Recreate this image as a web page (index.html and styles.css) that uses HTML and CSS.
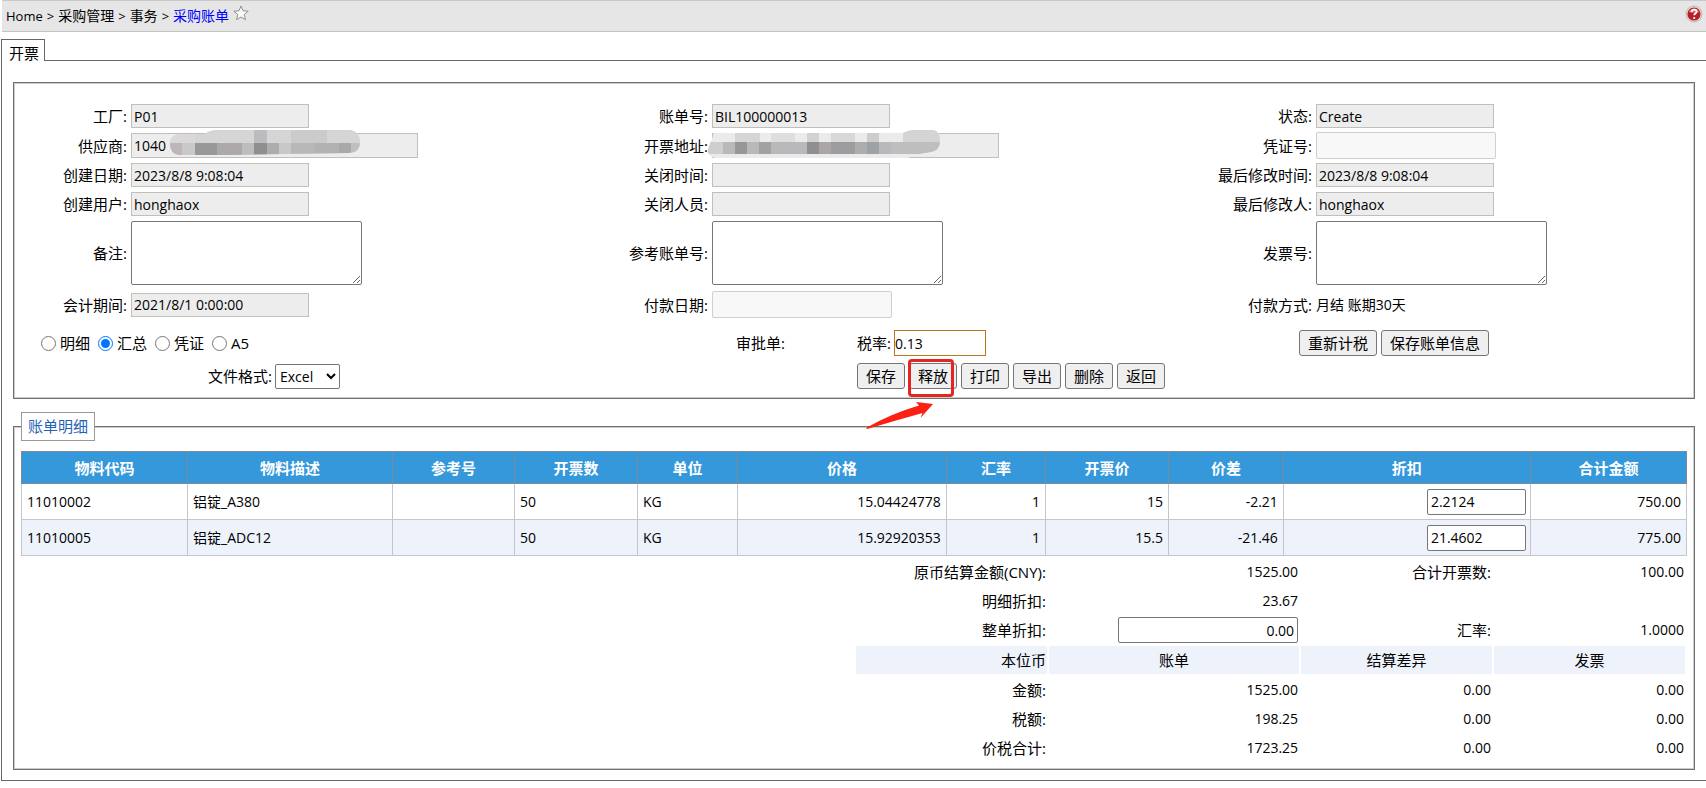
FILE: index.html
```html
<!DOCTYPE html>
<html lang="zh-CN">
<head>
<meta charset="utf-8">
<title>采购账单</title>
<link rel="stylesheet" href="styles.css">
</head>
<body>
<header class="topbar">
  <nav class="crumbs">
    <span class="latin">Home</span><span class="latin">&gt;</span><span>采购管理</span><span class="latin">&gt;</span><span>事务</span><span class="latin">&gt;</span><a href="#">采购账单</a>
    <svg class="star" viewBox="0 0 16 16"><path d="M8 1l2 4.8 5.2.4-4 3.4 1.3 5.1L8 12l-4.500 2.700 1.300-5.100-4-3.400 5.200-.4z" fill="#fbfbfb" stroke="#8f8f8f" stroke-linejoin="round"/></svg>
  </nav>
  <svg class="help" viewBox="0 0 18 18"><circle cx="9" cy="9" r="8" fill="#e9dede" stroke="#c9b4b4"/><circle cx="9" cy="9" r="6.600" fill="#b3202a"/><path d="M3.500 7a6 6 0 0 1 11 0q-5.500 2-11 0z" fill="#cf6a70"/><path d="M6.600 7c0-3.200 5-3.200 5-.3 0 1.800-2.400 1.700-2.400 3.600" fill="none" stroke="#fff" stroke-width="1.800"/><circle cx="9.200" cy="13" r="1.100" fill="#fff"/></svg>
</header>

<div class="tabs"><a class="tab" href="#">开票</a></div>

<main class="page">
  <fieldset class="panel bill">
    <div class="form">
      <label for="plant">工厂:</label><div><input class="ro" id="plant" value="P01" readonly></div>
      <label for="billno">账单号:</label><div><input class="ro" id="billno" value="BIL100000013" readonly></div>
      <label for="status">状态:</label><div><input class="ro" id="status" value="Create" readonly></div>

      <label for="vendor">供应商:</label>
      <div class="masked"><input class="ro wide" id="vendor" value="1040" readonly>
        <svg class="mask mask-vendor" viewBox="0 0 190 26"><defs><clipPath id="m1"><path d="M10 4H34Q40 0 46 0H181Q190 2 190 12Q190 23 178 23L60 25H9Q0 24 0 14Q0 5 10 4Z"/></clipPath></defs><g clip-path="url(#m1)"><rect width="190" height="26" fill="#d5d5d5"/><rect y="0" width="25" height="13" fill="#dad8d8"/><rect y="13" width="12" height="13" fill="#bdb6b8"/><rect x="12" y="13" width="13" height="13" fill="#c9c9c9"/><rect x="25" y="13" width="22" height="13" fill="#98989a"/><rect x="47" y="13" width="25" height="13" fill="#aca8ab"/><rect x="72" y="13" width="12" height="13" fill="#bdbdbf"/><rect x="84" y="0" width="13" height="13" fill="#bcbcbe"/><rect x="84" y="13" width="13" height="13" fill="#8f8f91"/><rect x="97" y="13" width="12" height="13" fill="#adadaf"/><rect x="109" y="13" width="12" height="13" fill="#c8c8c8"/><rect x="121" y="13" width="24" height="13" fill="#b7b8ba"/><rect x="121" y="0" width="36" height="13" fill="#cbcbcc"/><rect x="145" y="13" width="24" height="13" fill="#b4b1b3"/><rect x="169" y="13" width="12" height="13" fill="#a9a9aa"/><rect x="181" y="13" width="12" height="13" fill="#bfbfbf"/></g></svg>
      </div>
      <label for="addr">开票地址:</label>
      <div class="masked"><input class="ro wide" id="addr" readonly>
        <svg class="mask mask-addr" viewBox="0 0 232 28"><defs><clipPath id="m2"><path d="M6 3H195Q200 0 206 0H225Q232 1 232 10Q232 21 222 22L210 24L200 28H8Q0 27 0 20Z"/></clipPath></defs><g clip-path="url(#m2)"><rect width="232" height="28" fill="#ebebeb"/><rect y="12" width="232" height="12" fill="#b9b9bb"/><rect width="15" y="12" height="12" fill="#cfcdce"/><rect x="27" width="25" height="12" fill="#d6d6d6"/><rect x="27" y="12" width="12" height="12" fill="#979798"/><rect x="51" y="12" width="12" height="12" fill="#a3a0a2"/><rect x="63" width="24" height="12" fill="#dedede"/><rect x="99" width="12" height="12" fill="#d2d2d2"/><rect x="99" y="12" width="12" height="12" fill="#8f8f91"/><rect x="111" y="12" width="12" height="12" fill="#aaa5a6"/><rect x="123" width="24" height="12" fill="#d8d8d8"/><rect x="123" y="12" width="24" height="12" fill="#9d9d9f"/><rect x="147" y="12" width="12" height="12" fill="#adadae"/><rect x="159" width="12" height="12" fill="#cdcdcd"/><rect x="159" y="12" width="12" height="12" fill="#9ca2a5"/><rect x="195" width="37" height="12" fill="#d4d4d4"/><rect x="183" y="12" width="49" height="12" fill="#bebec0"/></g></svg>
      </div>
      <label for="voucher">凭证号:</label><div><input class="off" id="voucher" disabled></div>

      <label for="cdate">创建日期:</label><div><input class="ro" id="cdate" value="2023/8/8 9:08:04" readonly></div>
      <label for="xdate">关闭时间:</label><div><input class="ro" id="xdate" readonly></div>
      <label for="mdate">最后修改时间:</label><div><input class="ro" id="mdate" value="2023/8/8 9:08:04" readonly></div>

      <label for="cuser">创建用户:</label><div><input class="ro" id="cuser" value="honghaox" readonly></div>
      <label for="xuser">关闭人员:</label><div><input class="ro" id="xuser" readonly></div>
      <label for="muser">最后修改人:</label><div><input class="ro" id="muser" value="honghaox" readonly></div>

      <label for="remark">备注:</label><div><textarea id="remark"></textarea></div>
      <label for="refno">参考账单号:</label><div><textarea id="refno"></textarea></div>
      <label for="invno">发票号:</label><div><textarea id="invno"></textarea></div>

      <label for="period">会计期间:</label><div><input class="ro" id="period" value="2021/8/1 0:00:00" readonly></div>
      <label for="paydate">付款日期:</label><div><input class="off" id="paydate" disabled></div>
      <span class="lbl">付款方式:</span><div>月结 账期30天</div>
    </div>

    <div class="actions">
      <div class="radios">
        <label><input type="radio" name="kind">明细</label>
        <label><input type="radio" name="kind" checked>汇总</label>
        <label><input type="radio" name="kind">凭证</label>
        <label><input type="radio" name="kind">A5</label>
      </div>
      <span class="lbl">审批单:</span>
      <div class="rate"><label for="rate">税率:</label><input id="rate" value="0.13"></div>
      <div class="buttons"><button>重新计税</button><button>保存账单信息</button></div>
      <div class="format"><label for="fmt">文件格式:</label><select id="fmt"><option>Excel</option></select></div>
      <div class="buttons main-buttons">
        <button>保存</button>
        <span class="marked"><button>释放</button><span class="redbox"></span>
          <svg class="arrow" viewBox="0 0 68 28"><path d="M0 27Q24 13 53 4.500L50 1 67 3 54.500 17 56.500 12Q28 20 1 28Z" fill="#fb1f14"/></svg></span>
        <button>打印</button><button>导出</button><button>删除</button><button>返回</button>
      </div>
    </div>
  </fieldset>

  <fieldset class="panel detail">
    <legend>账单明细</legend>
    <table class="items">
      <colgroup><col style="width:9.97%"><col style="width:12.31%"><col style="width:7.33%"><col style="width:7.39%"><col style="width:6%"><col style="width:12.55%"><col style="width:5.95%"><col style="width:7.39%"><col style="width:6.9%"><col style="width:14.84%"><col style="width:9.37%"></colgroup>
      <thead><tr><th>物料代码</th><th>物料描述</th><th>参考号</th><th>开票数</th><th>单位</th><th>价格</th><th>汇率</th><th>开票价</th><th>价差</th><th>折扣</th><th>合计金额</th></tr></thead>
      <tbody>
        <tr><td>11010002</td><td>铝锭_A380</td><td></td><td>50</td><td>KG</td><td class="num">15.04424778</td><td class="num">1</td><td class="num">15</td><td class="num">-2.21</td><td class="num"><input aria-label="折扣" value="2.2124"></td><td class="num">750.00</td></tr>
        <tr><td>11010005</td><td>铝锭_ADC12</td><td></td><td>50</td><td>KG</td><td class="num">15.92920353</td><td class="num">1</td><td class="num">15.5</td><td class="num">-21.46</td><td class="num"><input aria-label="折扣" value="21.4602"></td><td class="num">775.00</td></tr>
      </tbody>
    </table>
    <table class="totals">
      <colgroup><col class="c-side"><col class="c-mid"><col class="c-side"><col class="c-side"></colgroup>
      <tr><th>原币结算金额(CNY):</th><td>1525.00</td><th>合计开票数:</th><td>100.00</td></tr>
      <tr><th>明细折扣:</th><td>23.67</td><th></th><td></td></tr>
      <tr class="tall"><th><label for="disc">整单折扣:</label></th><td><input id="disc" value="0.00"></td><th>汇率:</th><td>1.0000</td></tr>
      <tr class="head tall"><th class="first">本位币</th><th>账单</th><th>结算差异</th><th>发票</th></tr>
      <tr><th>金额:</th><td>1525.00</td><td>0.00</td><td>0.00</td></tr>
      <tr><th>税额:</th><td>198.25</td><td>0.00</td><td>0.00</td></tr>
      <tr><th>价税合计:</th><td>1723.25</td><td>0.00</td><td>0.00</td></tr>
    </table>
  </fieldset>
</main>
</body>
</html>
```
FILE: styles.css
```css
* { box-sizing: border-box; }
body {
  margin: 0;
  background: #fff;
  color: #000;
  font: 14px/20px "Open Sans", "Noto Sans CJK SC", sans-serif;
}
input, textarea, select, button { font: inherit; color: inherit; margin: 0; }
a { text-decoration: none; color: inherit; }

.topbar {
  display: flex;
  justify-content: space-between;
  align-items: flex-start;
  height: 32px;
  margin-left: 2px;
  padding: 4px 3px 0 4px;
  background: #e6e6e6;
  border-top: 1px solid #c8c8c8;
  border-bottom: 1px solid #c4c4c4;
}
.crumbs { display: flex; gap: 4px; line-height: 22px; }
.crumbs .latin { font-size: 13px; }
.crumbs a { color: #00f; }
.star { width: 16px; height: 16px; }
.help { width: 18px; height: 18px; }

.tabs {
  display: flex;
  margin: 7px 0 0 1px;
  border-bottom: 1px solid #666;
}
.tab {
  height: 22px;
  margin-bottom: -1px;
  padding: 2px 5px 0 7px;
  font-size: 15px;
  line-height: 22px;
  background: #fff;
  border: 1px solid #666;
  border-bottom: 0;
}
.page {
  margin-left: 1px;
  padding: 21px 11px 10px;
  border-left: 1px solid #666;
  border-bottom: 1px solid #666;
}
.panel {
  margin: 0;
  min-width: 0;
  border: 1px solid #707070;
  box-shadow: inset 0 0 0 1px #ccc;
}
.bill { padding: 20px 1px 9px; }

.form {
  display: grid;
  grid-template-columns: 112fr 461fr 112fr 484fr 112fr 377fr;
  grid-auto-rows: minmax(26px, auto);
  gap: 3px 4px;
  align-items: center;
}
.form > * { min-width: 0; }
.form > div { display: flex; align-items: center; }
label, .lbl { font-size: 15px; white-space: nowrap; }
.form > label, .form > .lbl { text-align: right; }
.form > :nth-last-child(-n+6) { margin-top: 3px; }

.ro {
  width: 178px;
  height: 24px;
  padding: 0 2px;
  background: #ededed;
  border: 1px solid #bfbfbb;
}
.wide { width: 287px; height: 25px; }
.off {
  width: 180px;
  height: 27px;
  background: #f8f8f8;
  border: 1px solid #cfcfcf;
  border-radius: 2px;
}
textarea {
  display: block;
  width: 231px;
  height: 64px;
  margin-top: 1px;
  border: 1px solid #767676;
  border-radius: 2px;
}
.masked { position: relative; }
.mask { position: absolute; }
.mask-vendor { left: 39px; top: -3px; width: 190px; height: 26px; }
.mask-addr { left: -4px; top: -3px; width: 232px; height: 28px; }

.actions {
  display: grid;
  grid-template-columns: 721fr 121fr 442fr 394fr;
  gap: 7px 0;
  align-items: center;
  padding-top: 12px;
}
.radios { display: flex; gap: 8px; padding-left: 26px; }
.radios label { display: flex; align-items: center; gap: 4px; }
.radios input { width: 15px; height: 15px; }
.rate { display: flex; align-items: center; gap: 3px; }
.rate input {
  width: 92px;
  height: 26px;
  padding: 0;
  background: #fff;
  border: 1px solid #b5771f;
}
.format {
  grid-column: 1 / 3;
  display: flex;
  align-items: center;
  gap: 3px;
  padding-left: 193px;
}
select {
  width: 65px;
  height: 25px;
  padding: 0;
  background: #fff;
  border: 1px solid #767676;
  border-radius: 2px;
}
.buttons { display: flex; gap: 4px; }
.main-buttons { grid-column: 3 / 5; }
button {
  height: 26px;
  padding: 0 8px;
  font-size: 15px;
  line-height: 22px;
  white-space: nowrap;
  background: #efefef;
  border: 1px solid #767676;
  border-radius: 3px;
}
.marked { position: relative; }
.redbox {
  position: absolute;
  left: -1px;
  top: -4px;
  width: 46px;
  height: 38px;
  border: 3px solid #e52620;
  border-radius: 4px;
}
.arrow {
  position: absolute;
  left: -43px;
  top: 38px;
  width: 68px;
  height: 28px;
}

.detail { margin-top: 13px; padding: 10px 7px 6px; }
.detail legend {
  padding: 0 6px;
  font-size: 15px;
  line-height: 27px;
  color: #1f63b5;
  background: #fff;
  border: 1px solid #999;
}
.items {
  width: 100%;
  table-layout: fixed;
  border-collapse: collapse;
}
.items th {
  height: 32px;
  padding: 0;
  font-size: 15px;
  color: #fff;
  background: #3498db;
  border: 1px solid #7d8b96;
}
.items td {
  height: 36px;
  padding: 0 5px;
  border: 1px solid #c3c6cf;
}
.items tbody tr:nth-child(2) { background: #eef2fb; }
.num { text-align: right; }
.items input {
  display: block;
  width: 99px;
  height: 26px;
  margin-left: auto;
  margin-right: -1px;
  padding: 0 3px;
  background: #fff;
  border: 1px solid #767676;
  border-radius: 2px;
}
.totals {
  width: 50%;
  margin-left: auto;
  table-layout: fixed;
  border-spacing: 2px;
}
.c-side { width: 23.2%; }
.c-mid { width: 30.4%; }
.totals th, .totals td {
  height: 27px;
  padding: 0 1px;
  text-align: right;
  font-weight: 400;
}
.totals .tall th, .totals .tall td { height: 28px; }
.totals th { font-size: 15px; }
.totals .head th { text-align: center; background: #eef2fb; }
.totals .head .first { text-align: right; }
.totals input {
  display: block;
  width: 180px;
  height: 26px;
  margin-left: auto;
  padding: 0 3px;
  text-align: right;
  background: #fff;
  border: 1px solid #767676;
  border-radius: 2px;
}
```
